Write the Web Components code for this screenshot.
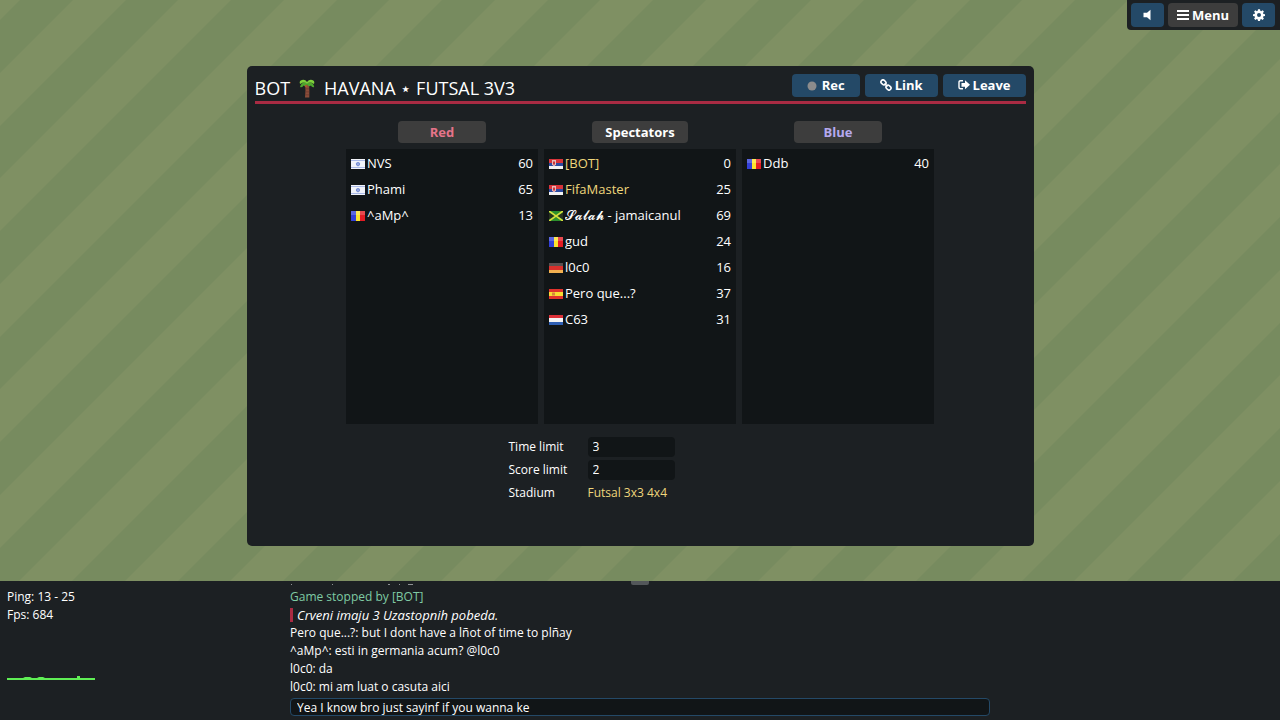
<!DOCTYPE html>
<html lang="en">
<head>
<meta charset="utf-8">
<title>Room lobby</title>
<style>
  html, body { height: 100%; margin: 0; }
  body {
    --panel: #1c2023;
    --well: #111517;
    --button: #244967;
    --neutral: #3d3d3d;
    --admin: #efd67c;
    --accent: #a92b43;
    background: var(--panel);
    color: #fff;
    font: 13px/18px "Open Sans", "Noto Sans", sans-serif;
  }
</style>
</head>
<body>
<game-view>
  <top-bar slot="tools"></top-bar>
  <room-dialog slot="dialog">
    <span slot="name">BOT</span>
    <ui-icon slot="name" name="palm" style="--w: 18px; --h: 20px"></ui-icon>
    <span slot="name">HAVANA ⋆ FUTSAL 3V3</span>
    <team-list label="Red" tone="red">
      <player-row flag="il" ping="60">NVS</player-row>
      <player-row flag="il" ping="65">Phami</player-row>
      <player-row flag="ro" ping="13">^aMp^</player-row>
    </team-list>
    <team-list label="Spectators">
      <player-row flag="rs" ping="0" admin>[BOT]</player-row>
      <player-row flag="rs" ping="25" admin>FifaMaster</player-row>
      <player-row flag="jm" ping="69">𝓢𝓪𝓵𝓪𝓱 - jamaicanul</player-row>
      <player-row flag="ro" ping="24">gud</player-row>
      <player-row flag="de" ping="16">l0c0</player-row>
      <player-row flag="es" ping="37">Pero que...?</player-row>
      <player-row flag="nl" ping="31">C63</player-row>
    </team-list>
    <team-list label="Blue" tone="blue">
      <player-row flag="ro" ping="40">Ddb</player-row>
    </team-list>
    <room-settings slot="settings"></room-settings>
  </room-dialog>
  <net-stats slot="stats"></net-stats>
  <chat-box slot="chat">
    <chat-line kind="notice">Game stopped by [BOT]</chat-line>
    <chat-line kind="announcement">Crveni imaju 3 Uzastopnih pobeda.</chat-line>
    <chat-line>Pero que...?: but I dont have a lñot of time to plñay</chat-line>
    <chat-line>^aMp^: esti in germania acum? @l0c0</chat-line>
    <chat-line>l0c0: da</chat-line>
    <chat-line>l0c0: mi am luat o casuta aici</chat-line>
  </chat-box>
</game-view>

<script>
const define = (tag, render) => customElements.define(tag, class extends HTMLElement {
  connectedCallback() {
    if (this.shadowRoot) return;
    this.attachShadow({ mode: 'open' }).innerHTML = render(this);
  }
});

const ICONS = {
  sound: ['0 0 12 12', '<path fill="currentColor" d="M9.500 .8v10.400L6 8.200H2.500V3.800H6z"/>'],
  menu: ['0 0 12 12', '<path fill="currentColor" d="M0 1h12v2H0zM0 5h12v2H0zM0 9h12v2H0z"/>'],
  cog: ['0 0 12 12', '<path fill="currentColor" fill-rule="evenodd" d="M5 .2h2l.3 1.600.9.4 1.400-.9 1.300 1.300-.9 1.400.4.9 1.600.3v1.800l-1.600.3-.4.9.9 1.400-1.300 1.300-1.400-.9-.9.4-.3 1.500H5l-.3-1.500-.9-.4-1.400.9-1.300-1.300.9-1.400-.4-.9L0 7V5.200l1.600-.3.4-.9-.9-1.400 1.300-1.300 1.400.9.9-.4zM6 4.100a2 2 0 1 0 0 4 2 2 0 0 0 0-4z"/>'],
  rec: ['0 0 12 12', '<circle cx="5" cy="7" r="4.500" fill="#8c8c8c"/>'],
  link: ['0 0 12 12', '<g fill="none" stroke="currentColor" stroke-width="1.600"><rect x="-2.700" y="-2" width="5.400" height="4" rx="2" transform="translate(3.500 3.400) rotate(45)"/><rect x="-2.700" y="-2" width="5.400" height="4" rx="2" transform="translate(8.500 8.600) rotate(45)"/><path d="M4.500 4.500l3 3"/></g>'],
  leave: ['0 0 12 12', '<path fill="none" stroke="currentColor" stroke-width="1.400" d="M5 1.700H2.500Q1 1.700 1 3.200v5.100q0 1.500 1.500 1.500H5"/><path fill="currentColor" d="M7 1.300l5 4.500-5 4.500V7.700H3.500V3.900H7z"/>'],
  palm: ['0 0 18 20', '<path fill="#8b4d3a" d="M7.300 7h3.800q.4 6 .2 12.500H7Q7.800 13 7.300 7z"/><path fill="#6e382c" d="M7.500 10.500H11v.8H7.500zM7.500 13.500h3.700v.8H7.500zM7.200 16.500h4v.8h-4z"/><path fill="#4fa82e" d="M9 5Q3.500 3 2 9q2.500 1 3.500-1.500Q8 9.500 9 6.500q1.500 3 4 1 .8 2.200 3.200 1.500Q15 3 9 5z"/><path fill="#7fd13b" d="M9 4Q6.500 0 2 3q-1 2.500.5 3Q5.500 3.500 9 5.500q3.500-2 6.500.5 1.500-.5.5-3-4-3-7 1z"/><circle cx="8" cy="8" r="1.300" fill="#a8562f"/>']
};

const FLAGS = {
  il: '<path fill="#f1f3fa" d="M0 0h14v10H0z"/><path fill="#a9b8e6" d="M0 1h14v1H0zM0 8h14v1H0z"/><path fill="none" stroke="#6a83d0" stroke-width=".8" d="M7 3l1.800 3H5.200zM7 7.200L5.200 4.100h3.600z"/>',
  ro: '<path fill="#3340d8" d="M0 0h5v10H0z"/><path fill="#fbe32c" d="M5 0h4v10H5z"/><path fill="#e31c24" d="M9 0h5v10H9z"/><path fill="#fff" opacity=".2" d="M0 0h14v4H0z"/>',
  rs: '<path fill="#d8343a" d="M0 0h14v4H0z"/><path fill="#2c4aa0" d="M0 4h14v3H0z"/><path fill="#f3f3f3" d="M0 7h14v3H0z"/><path fill="#e8b9b9" d="M3 1h4v4.500L5 7.500l-2-2z"/><path fill="#c8373b" d="M4 2.500h2v3H4z"/>',
  jm: '<path fill="#2c8f2c" d="M0 0h14v10H0z"/><path fill="#26301f" d="M0 1.500L5.500 5 0 8.500zM14 1.500L8.500 5 14 8.500z"/><path stroke="#d8dc3c" stroke-width="1.600" d="M0 0l14 10M14 0L0 10"/>',
  de: '<path fill="#5a5050" d="M0 0h14v4H0z"/><path fill="#d9302c" d="M0 3h14v4H0z"/><path fill="#f2b050" d="M0 7h14v3H0z"/>',
  es: '<path fill="#e0322c" d="M0 0h14v10H0z"/><path fill="#f8dc32" d="M0 3h14v4H0z"/><path fill="#d8863c" d="M3 3.500h3v3H3z"/>',
  nl: '<path fill="#dc3038" d="M0 0h14v3H0z"/><path fill="#f4f4f4" d="M0 3h14v4H0z"/><path fill="#2f5fb4" d="M0 7h14v3H0z"/>'
};

define('ui-icon', el => {
  const [box, art] = ICONS[el.getAttribute('name')];
  return `<style>
    :host { display: inline-flex; flex: none; }
    svg { display: block; width: var(--w, 12px); height: var(--h, 12px); }
  </style><svg viewBox="${box}" aria-hidden="true">${art}</svg>`;
});

define('ui-button', el => {
  const icon = el.getAttribute('icon');
  const label = el.getAttribute('label');
  return `<style>
    :host { display: inline-block; }
    button {
      display: flex; align-items: center; justify-content: center; gap: var(--gap, 3px);
      box-sizing: border-box; width: 100%; min-width: var(--min, 0);
      height: var(--height, 23px); margin: 0; padding: 0 var(--pad, 15px) 1px;
      border: 0; border-radius: 4px;
      background: var(--bg, var(--button)); color: var(--fg, #fff);
      font: 700 13px/18px "Open Sans", "Noto Sans", sans-serif;
    }
  </style><button type="button" ${label ? `aria-label="${label}"` : ''}>${icon ? `<ui-icon name="${icon}"></ui-icon>` : ''}<slot></slot></button>`;
});

define('top-bar', () => `<style>
    :host {
      display: flex; gap: 4px; padding: 3px 5px 3px 4px;
      background: var(--panel); border-bottom-left-radius: 4px;
      --height: 24px;
    }
    .square { --pad: 10px; --min: 33px; --gap: 0; }
    .menu { --pad: 9px; --bg: var(--neutral); }
  </style>
  <ui-button class="square" icon="sound" label="Sound"></ui-button>
  <ui-button class="menu" icon="menu">Menu</ui-button>
  <ui-button class="square" icon="cog" label="Settings"></ui-button>`);

define('turf-field', () => `<style>
    :host { display: block; }
    svg { display: block; width: 100%; height: 100%; }
  </style>
  <svg aria-hidden="true">
    <pattern id="turf" width="211" height="211" patternUnits="userSpaceOnUse" patternTransform="translate(20 0)">
      <rect width="211" height="211" fill="#7f9063"/>
      <path fill="#778b5f" d="M0 0H53L0 53zM106 0H158L0 158V106zM211 0V53L53 211H0zM211 106V158L158 211H106z"/>
    </pattern>
    <rect width="100%" height="100%" fill="url(#turf)"/>
  </svg>`);

define('game-view', () => `<style>
    :host { display: flex; flex-direction: column; min-height: 100vh; }
    .stage {
      position: relative; flex: 1; display: flex; justify-content: center; align-items: flex-start;
      box-sizing: border-box; padding: 66px 16px 35px;
    }
    turf-field { position: absolute; inset: 0; }
    slot[name=tools] { display: block; position: absolute; top: 0; right: 0; }
    slot[name=dialog]::slotted(*) { position: relative; }
    .bottom {
      position: relative; display: grid; grid-template-columns: minmax(100px, 1fr) minmax(0, 700px) minmax(0, 1fr);
      height: 139px; background: var(--panel); font-size: 12px;
    }
    .grip {
      position: absolute; top: 0; left: 50%; width: 18px; height: 4px; margin-left: -9px;
      background: #53575a; border-radius: 0 0 2px 2px;
    }
  </style>
  <section class="stage">
    <turf-field></turf-field>
    <slot name="dialog"></slot>
    <slot name="tools"></slot>
  </section>
  <section class="bottom">
    <slot name="stats"></slot>
    <slot name="chat"></slot>
    <div class="grip"></div>
  </section>`);

define('room-dialog', () => `<style>
    :host {
      display: block; box-sizing: border-box; width: 100%; max-width: 787px; min-height: 480px;
      padding: 8px; background: var(--panel); border-radius: 5px;
    }
    header {
      display: flex; justify-content: space-between; align-items: flex-start;
      height: 27px; border-bottom: 3px solid var(--accent);
    }
    h1 { display: flex; align-items: center; gap: 8px; margin: 0; font-size: 18px; font-weight: 500; line-height: 28px; }
    nav { display: flex; gap: 5px; }
    .teams { display: flex; justify-content: center; gap: 6px; margin-top: 17px; }
    ::slotted(team-list) { flex: 0 1 192px; }
  </style>
  <header>
    <h1><slot name="name"></slot></h1>
    <nav>
      <ui-button icon="rec">Rec</ui-button>
      <ui-button icon="link">Link</ui-button>
      <ui-button icon="leave">Leave</ui-button>
    </nav>
  </header>
  <div class="teams"><slot></slot></div>
  <slot name="settings"></slot>`);

define('team-list', el => `<style>
    :host { display: flex; flex-direction: column; align-items: center; gap: 6px; }
    ui-button { --bg: var(--neutral); --height: 22px; --min: 88px; --pad: 13px; }
    :host([tone=red]) { --fg: #e5748a; }
    :host([tone=blue]) { --fg: #b5a9ef; }
    .list {
      box-sizing: border-box; width: 100%; height: 275px; padding: 1px 5px; background: var(--well);
    }
  </style>
  <ui-button>${el.getAttribute('label')}</ui-button>
  <div class="list" role="list"><slot></slot></div>`);

define('player-row', el => `<style>
    :host { display: flex; align-items: center; height: 26px; white-space: nowrap; }
    :host([admin]) .name { color: var(--admin); }
    svg { flex: none; width: 14px; height: 10px; margin: 1px 2px 0 0; }
    .name { flex: 1; overflow: hidden; }
  </style>
  <svg viewBox="0 0 14 10" aria-hidden="true">${FLAGS[el.getAttribute('flag')]}</svg>
  <span class="name"><slot></slot></span>
  <span>${el.getAttribute('ping')}</span>`);

define('room-settings', () => `<style>
    :host {
      display: grid; grid-template-columns: 76px 87px; gap: 3px; align-items: center;
      width: 263px; margin: 13px auto 0; font-size: 12px;
    }
    select {
      appearance: none; box-sizing: border-box; width: 100%; height: 20px; margin: 0; padding: 0 5px;
      border: 0; border-radius: 4px; background: var(--well); color: inherit; opacity: 1;
      font: 12px/18px "Open Sans", "Noto Sans", sans-serif;
    }
    label, .key, .stadium { line-height: 20px; }
    .stadium { color: var(--admin); white-space: nowrap; }
  </style>
  <label for="time">Time limit</label><select id="time" disabled><option>3</option></select>
  <label for="score">Score limit</label><select id="score" disabled><option>2</option></select>
  <span class="key">Stadium</span><span class="stadium">Futsal 3x3 4x4</span>`);

define('net-stats', () => `<style>
    :host { display: flex; flex-direction: column; padding: 7px; font-size: 12px; }
    svg { width: 88px; height: 5px; margin-top: 51px; }
  </style>
  <span>Ping: 13 - 25</span>
  <span>Fps: 684</span>
  <svg viewBox="0 0 88 5" aria-hidden="true"><path fill="#5fee55" d="M0 3h16l2-1h5l2 1h5l2-1h4l2 1h32V1h3v2h15v2H0z"/></svg>`);

define('chat-line', () => `<style>
    :host { display: block; height: 18px; white-space: nowrap; font-size: 12px; }
    :host([kind=notice]) { color: #7fcba4; }
    :host([kind=announcement]) {
      box-sizing: border-box; height: 14px; margin: 2px 0; padding-left: 4px;
      border-left: 3px solid var(--accent); font-size: 13px; line-height: 14px; font-style: italic;
    }
  </style><slot></slot>`);

define('chat-box', () => `<style>
    :host { display: flex; flex-direction: column; justify-content: flex-end; box-sizing: border-box; padding-bottom: 4px; }
    .previous { width: 130px; height: 2px; margin-bottom: 2px; }
    .log { margin-bottom: 2px; }
    input {
      box-sizing: border-box; width: 100%; height: 18px; margin: 0; padding: 0 6px;
      border: 1px solid #244967; border-radius: 4px; background: var(--well); color: inherit;
      font: 12px/16px "Open Sans", "Noto Sans", sans-serif; outline: 0;
    }
  </style>
  <svg class="previous" viewBox="0 0 130 2" aria-hidden="true"><path fill="#8e9193" d="M1 0h1v1H1zM42 0h1v1h-1zM98 0h2v1h-2zM109 0h1v1h-1zM118 0h5v1h-5z"/></svg>
  <div class="log"><slot></slot></div>
  <input type="text" aria-label="Chat message" value="Yea I know bro just sayinf if you wanna ke">`);
</script>
</body>
</html>
